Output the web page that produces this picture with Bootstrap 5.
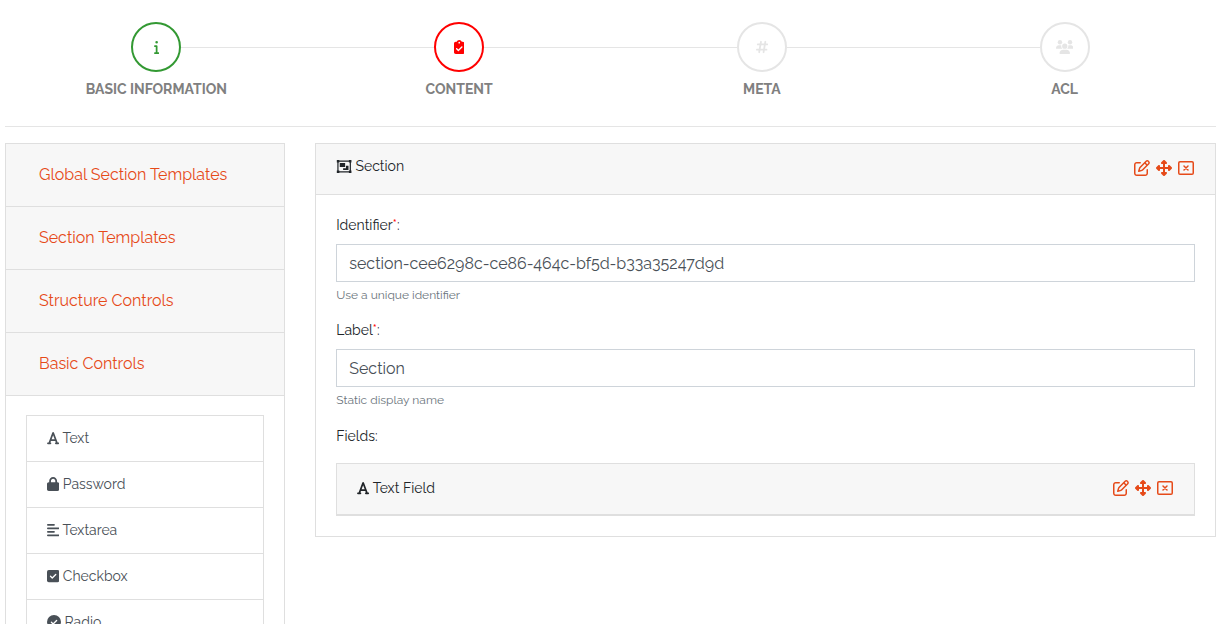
<!DOCTYPE html>
<html lang="en">
<head>
<meta charset="utf-8">
<meta name="viewport" content="width=device-width, initial-scale=1">
<title>Content</title>
<link href="https://cdn.jsdelivr.net/npm/bootstrap@5.3.0/dist/css/bootstrap.min.css" rel="stylesheet">
<style>
body { font-family: Raleway, Lato, "Liberation Sans", sans-serif; font-size: 14px; font-weight: 400; line-height: 21px; color: #212529; padding: 0 5px; overflow-x: hidden; }
.fa-ico { height: 14px; width: auto; fill: currentColor; vertical-align: -2px; }
.fa-group { height: 13px; }
.steps { border-bottom: 1px solid #e5e5e5; padding: 22px 0 27px; margin-bottom: 16px; }
.step { position: relative; color: #e5e5e5; }
.step + .step::before { content: ""; position: absolute; top: 25px; right: calc(50% + 25px); width: calc(100% - 50px); height: 1px; background: #e5e5e5; }
.step-dot { width: 50px; height: 50px; border: 2px solid currentColor; border-radius: 50%; background: #fff; color: inherit; padding: 0; }
.step-done { color: #339933; }
.step-now { color: #ff0000; }
.step-name { color: #808080; font-weight: 700; line-height: 20px; margin-top: 7px; }
.panes { --bs-gutter-x: 30px; }
.card { --bs-card-border-radius: 0; --bs-card-inner-border-radius: 0; --bs-card-border-color: #dfdfdf; --bs-card-cap-bg: #f7f7f7; --bs-card-cap-padding-x: 20px; --bs-card-cap-padding-y: 12px; --bs-card-spacer-x: 20px; --bs-card-spacer-y: 20px; }
.group-head button { display: block; width: 100%; text-align: left; border: 0; background: none; color: #e64a19; font-size: 16px; line-height: 24px; padding: 7px 13px; }
.tools-body { padding-top: 19px; }
.tools { --bs-list-group-border-radius: 0; --bs-list-group-border-color: #dfdfdf; --bs-list-group-item-padding-x: 20px; --bs-list-group-item-padding-y: 12px; }
.tools .list-group-item { color: #495057; }
.section-head { height: 51px; }
.field-title { padding-top: 2px; }
.acts { gap: 6px; padding-right: 1px; }
.act { border: 0; background: none; padding: 0; color: #e64a19; }
.act svg { width: 16px; height: 16px; display: block; fill: currentColor; }
.form-label { margin-bottom: 8px; display: block; }
.fields-title { line-height: 23px; margin-bottom: 15px; }
.form-control { border-radius: 0; border-color: #ced4da; color: #495057; font-size: 16px; line-height: 24px; padding: 7px 12px 5px; }
.form-text { font-size: 12px; line-height: 18px; margin-top: 4px; color: #6c757d; }
.req { color: #ff0000; }
</style>
</head>
<body>
<svg class="d-none" aria-hidden="true">
  <symbol id="i-font" viewBox="0 0 448 512"><path d="M254 52.8C249.3 40.3 237.3 32 224 32s-25.3 8.3-30 20.8L57.8 416H32c-17.7 0-32 14.3-32 32s14.3 32 32 32h96c17.7 0 32-14.3 32-32s-14.3-32-32-32h-1.8l18-48H303.8l18 48H320c-17.7 0-32 14.3-32 32s14.3 32 32 32h96c17.7 0 32-14.3 32-32s-14.3-32-32-32H390.2L254 52.8zM279.8 304H168.2L224 155.1 279.8 304z"/></symbol>
  <symbol id="i-edit" viewBox="0 0 512 512"><path d="M441 58.9L453.1 71c9.4 9.4 9.4 24.6 0 33.9L424 134.1 377.9 88 407 58.9c9.4-9.4 24.6-9.4 33.9 0zM209.8 256.2L344 121.9 390.1 168 255.8 302.2c-2.9 2.9-6.5 5-10.4 6.1l-58.5 16.7 16.7-58.5c1.1-3.9 3.2-7.5 6.1-10.4zM373.1 25L175.8 222.2c-8.7 8.7-15 19.4-18.3 31.1l-28.6 100c-2.4 8.4-.1 17.4 6.1 23.6s15.2 8.5 23.6 6.1l100-28.6c11.8-3.4 22.5-9.7 31.1-18.3L487 138.9c28.1-28.1 28.1-73.7 0-101.8L474.9 25C446.8-3.1 401.2-3.1 373.1 25zM88 64C39.4 64 0 103.4 0 152V424c0 48.6 39.4 88 88 88H360c48.6 0 88-39.4 88-88V312c0-13.3-10.7-24-24-24s-24 10.7-24 24V424c0 22.1-17.9 40-40 40H88c-22.1 0-40-17.9-40-40V152c0-22.1 17.9-40 40-40H200c13.3 0 24-10.7 24-24s-10.7-24-24-24H88z"/></symbol>
  <symbol id="i-move" viewBox="0 0 512 512"><path d="M256 70V442M70 256H442" fill="none" stroke="currentColor" stroke-width="64"/><path d="M233 9.400a32 32 0 0 1 46 0l64 64c20 20 6 54.600-23 54.600H192c-29 0-43-34.600-23-54.600zM233 502.600a32 32 0 0 0 46 0l64-64c20-20 6-54.600-23-54.600H192c-29 0-43 34.600-23 54.600zM9.400 233a32 32 0 0 0 0 46l64 64c20 20 54.600 6 54.600-23V192c0-29-34.600-43-54.600-23zM502.600 233a32 32 0 0 1 0 46l-64 64c-20 20-54.600 6-54.600-23V192c0-29 34.600-43 54.600-23z"/></symbol>
  <symbol id="i-close" viewBox="0 0 512 512"><rect x="24" y="56" width="464" height="400" rx="40" fill="none" stroke="currentColor" stroke-width="48"/><path d="M192 192L320 320M320 192L192 320" fill="none" stroke="currentColor" stroke-width="48" stroke-linecap="round"/></symbol>
</svg>

<nav class="steps d-flex text-center" aria-label="Steps">
  <div class="step step-done flex-fill w-25">
    <button type="button" class="step-dot" aria-label="Basic information"><svg class="fa-ico" viewBox="0 0 192 512"><path d="M48 80a48 48 0 1 1 96 0A48 48 0 1 1 48 80zM0 224c0-17.700 14.300-32 32-32l64 0c17.700 0 32 14.300 32 32l0 224 32 0c17.700 0 32 14.300 32 32s-14.300 32-32 32L32 512c-17.700 0-32-14.300-32-32s14.300-32 32-32l32 0 0-192-32 0c-17.700 0-32-14.300-32-32z"/></svg></button>
    <div class="step-name">BASIC INFORMATION</div>
  </div>
  <div class="step step-now flex-fill w-25">
    <button type="button" class="step-dot" aria-label="Content" aria-current="step"><svg class="fa-ico" viewBox="0 0 384 512"><path d="M192 0c-41.800 0-77.400 26.700-90.500 64L64 64C28.700 64 0 92.700 0 128L0 448c0 35.300 28.700 64 64 64l256 0c35.300 0 64-28.700 64-64l0-320c0-35.300-28.700-64-64-64l-37.500 0C269.400 26.700 233.800 0 192 0zm0 64a32 32 0 1 1 0 64 32 32 0 1 1 0-64zM305 273L177 401c-9.400 9.400-24.600 9.400-33.900 0L79 337c-9.400-9.400-9.400-24.600 0-33.900s24.600-9.400 33.900 0l47 47L271 239c9.400-9.400 24.600-9.400 33.900 0s9.400 24.600 0 33.900z"/></svg></button>
    <div class="step-name">CONTENT</div>
  </div>
  <div class="step flex-fill w-25">
    <button type="button" class="step-dot" aria-label="Meta"><svg class="fa-ico" viewBox="0 0 448 512"><path d="M182 64L116 448M342 64L276 448M64 160H416M32 352H384" fill="none" stroke="currentColor" stroke-width="64" stroke-linecap="round"/></svg></button>
    <div class="step-name">META</div>
  </div>
  <div class="step flex-fill w-25">
    <button type="button" class="step-dot" aria-label="ACL"><svg class="fa-ico" viewBox="0 0 640 512"><circle cx="144" cy="80" r="80"/><circle cx="512" cy="80" r="80"/><path d="M0 298.700C0 239.800 47.800 192 106.700 192l42.700 0c15.900 0 31 3.500 44.600 9.700c-1.300 7.200-1.900 14.700-1.900 22.300c0 38.200 16.800 72.500 43.300 96H21.300C9.600 320 0 310.400 0 298.700zM405.300 320c26.600-23.500 43.300-57.800 43.300-96c0-7.600-.7-15-1.900-22.300c13.600-6.300 28.700-9.700 44.600-9.700h42.700C592.200 192 640 239.800 640 298.700c0 11.800-9.600 21.300-21.300 21.300H405.300zM224 224a96 96 0 1 1 192 0 96 96 0 1 1-192 0zM128 485.300C128 411.700 187.700 352 261.300 352h117.300C452.300 352 512 411.700 512 485.300c0 14.700-11.900 26.700-26.700 26.700H154.700c-14.700 0-26.700-11.900-26.700-26.700z"/></svg></button>
    <div class="step-name">ACL</div>
  </div>
</nav>

<div class="row panes">
  <aside class="col-3">
    <div class="card">
      <div class="card-header group-head"><button type="button">Global Section Templates</button></div>
      <div class="card-header group-head"><button type="button">Section Templates</button></div>
      <div class="card-header group-head"><button type="button">Structure Controls</button></div>
      <div class="card-header group-head"><button type="button" aria-expanded="true">Basic Controls</button></div>
      <div class="card-body tools-body">
        <div class="list-group tools">
          <button type="button" class="list-group-item list-group-item-action"><svg class="fa-ico" viewBox="0 0 448 512"><use href="#i-font"/></svg> Text</button>
          <button type="button" class="list-group-item list-group-item-action"><svg class="fa-ico" viewBox="0 0 448 512"><path d="M144 144v48H304V144c0-44.200-35.800-80-80-80s-80 35.800-80 80zM80 192V144C80 64.500 144.500 0 224 0s144 64.500 144 144v48h16c35.300 0 64 28.700 64 64V448c0 35.300-28.700 64-64 64H64c-35.300 0-64-28.700-64-64V256c0-35.300 28.700-64 64-64H80z"/></svg> Password</button>
          <button type="button" class="list-group-item list-group-item-action"><svg class="fa-ico" viewBox="0 0 448 512"><path d="M32 64H256M32 192H416M32 320H256M32 448H416" fill="none" stroke="currentColor" stroke-width="64" stroke-linecap="round"/></svg> Textarea</button>
          <button type="button" class="list-group-item list-group-item-action"><svg class="fa-ico" viewBox="0 0 448 512"><rect y="32" width="448" height="448" rx="64"/><path d="M128 264L192 328L320 200" fill="none" stroke="#fff" stroke-width="48" stroke-linecap="round" stroke-linejoin="round"/></svg> Checkbox</button>
          <button type="button" class="list-group-item list-group-item-action"><svg class="fa-ico" viewBox="0 0 512 512"><circle cx="256" cy="256" r="256"/><path d="M160 264L224 328L352 200" fill="none" stroke="#fff" stroke-width="48" stroke-linecap="round" stroke-linejoin="round"/></svg> Radio</button>
        </div>
      </div>
    </div>
  </aside>

  <main class="col-9">
    <div class="card">
      <div class="card-header section-head d-flex justify-content-between">
        <div><svg class="fa-ico fa-group" viewBox="-32 0 616 512"><path d="M44 44H532V468H44z" fill="none" stroke="currentColor" stroke-width="48"/><path d="M0 0h100v100H0zM476 0h100v100H476zM0 412h100v100H0zM476 412h100v100H476zM116 116h212v164H116zM360 230h100v166H248v-76h112z"/></svg> Section</div>
        <div class="acts d-flex align-items-start pt-1">
          <button type="button" class="act" aria-label="Edit"><svg><use href="#i-edit"/></svg></button>
          <button type="button" class="act" aria-label="Move"><svg><use href="#i-move"/></svg></button>
          <button type="button" class="act" aria-label="Remove"><svg><use href="#i-close"/></svg></button>
        </div>
      </div>
      <div class="card-body">
        <div class="mb-3">
          <label class="form-label" for="ident">Identifier<span class="req">*</span>:</label>
          <input class="form-control" id="ident" type="text" value="section-cee6298c-ce86-464c-bf5d-b33a35247d9d">
          <div class="form-text">Use a unique identifier</div>
        </div>
        <div class="mb-3">
          <label class="form-label" for="lab">Label<span class="req">*</span>:</label>
          <input class="form-control" id="lab" type="text" value="Section">
          <div class="form-text">Static display name</div>
        </div>
        <div class="fields-title">Fields:</div>
        <div class="card">
          <div class="card-header section-head d-flex justify-content-between">
            <div class="field-title"><svg class="fa-ico" viewBox="0 0 448 512"><use href="#i-font"/></svg> Text Field</div>
            <div class="acts d-flex align-items-start pt-1">
              <button type="button" class="act" aria-label="Edit"><svg><use href="#i-edit"/></svg></button>
              <button type="button" class="act" aria-label="Move"><svg><use href="#i-move"/></svg></button>
              <button type="button" class="act" aria-label="Remove"><svg><use href="#i-close"/></svg></button>
            </div>
          </div>
        </div>
      </div>
    </div>
  </main>
</div>
<script src="https://cdn.jsdelivr.net/npm/bootstrap@5.3.0/dist/js/bootstrap.bundle.min.js"></script>
</body>
</html>
